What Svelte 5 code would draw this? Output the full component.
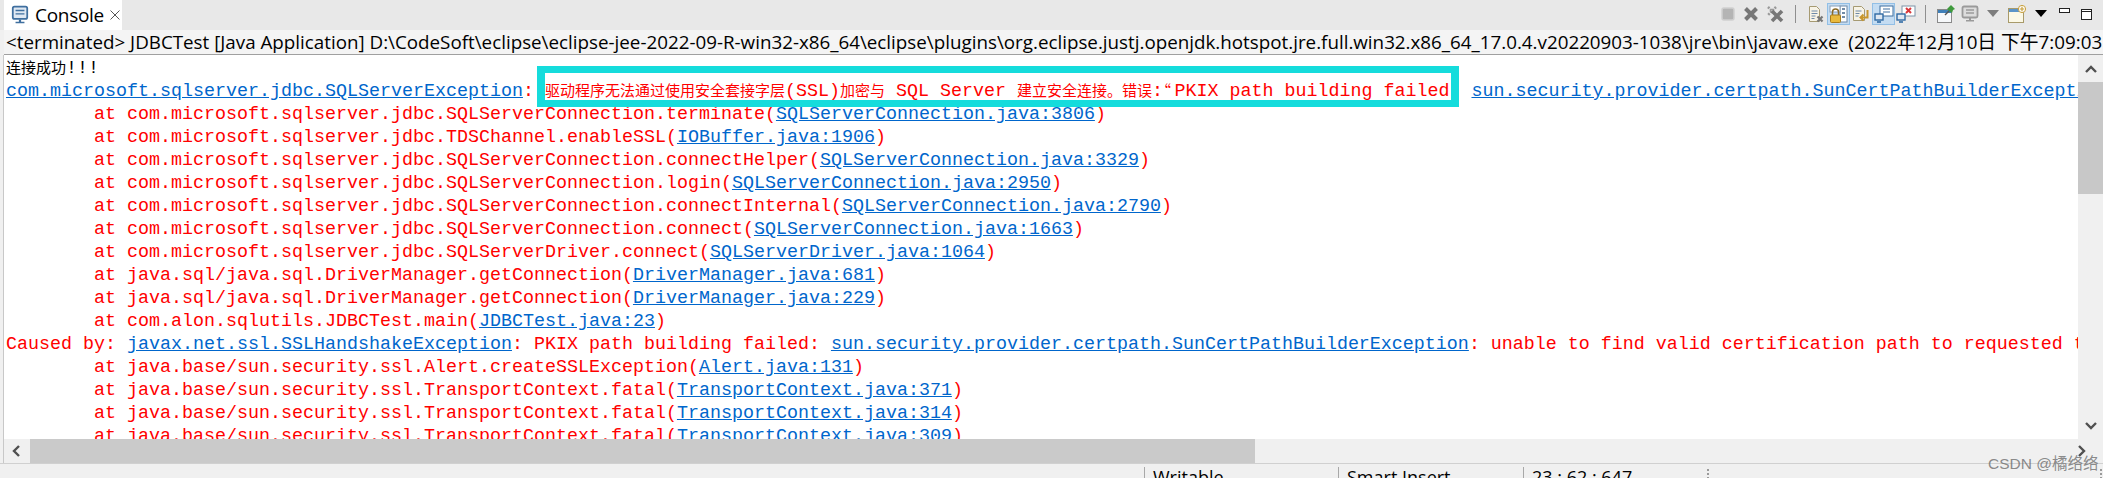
<script>
  // each row of the console: frame text and its source link
  const frames = [
    ["com.microsoft.sqlserver.jdbc.SQLServerConnection.terminate", "SQLServerConnection.java:3806"],
    ["com.microsoft.sqlserver.jdbc.TDSChannel.enableSSL", "IOBuffer.java:1906"],
    ["com.microsoft.sqlserver.jdbc.SQLServerConnection.connectHelper", "SQLServerConnection.java:3329"],
    ["com.microsoft.sqlserver.jdbc.SQLServerConnection.login", "SQLServerConnection.java:2950"],
    ["com.microsoft.sqlserver.jdbc.SQLServerConnection.connectInternal", "SQLServerConnection.java:2790"],
    ["com.microsoft.sqlserver.jdbc.SQLServerConnection.connect", "SQLServerConnection.java:1663"],
    ["com.microsoft.sqlserver.jdbc.SQLServerDriver.connect", "SQLServerDriver.java:1064"],
    ["java.sql/java.sql.DriverManager.getConnection", "DriverManager.java:681"],
    ["java.sql/java.sql.DriverManager.getConnection", "DriverManager.java:229"],
    ["com.alon.sqlutils.JDBCTest.main", "JDBCTest.java:23"],
  ];
  const frames2 = [
    ["java.base/sun.security.ssl.Alert.createSSLException", "Alert.java:131"],
    ["java.base/sun.security.ssl.TransportContext.fatal", "TransportContext.java:371"],
    ["java.base/sun.security.ssl.TransportContext.fatal", "TransportContext.java:314"],
    ["java.base/sun.security.ssl.TransportContext.fatal", "TransportContext.java:309"],
  ];
</script>

{#snippet frame(f)}
  <div class="row red indent">at {f[0]}(<a href="#top">{f[1]}</a>)</div>
{/snippet}

<div class="page">
  <div class="tabbar">
    <div class="tab">
      <svg width="20" height="20" viewBox="0 0 18 18">
        <rect x="2.5" y="1.5" width="13" height="11" rx="1.5" fill="#dfe8f2" stroke="#3f6f9f" stroke-width="1.6" />
        <path d="M5 5h8M5 8h8" stroke="#3f6f9f" stroke-width="1.3" />
        <path d="M8 13h2v2h3v1.5H5V15h3z" fill="#3f6f9f" />
      </svg>
      <span class="tabname">Console</span>
      <svg width="12" height="12" viewBox="0 0 12 12"><path d="M1.5 1.5l9 9M10.5 1.5l-9 9" stroke="#555" stroke-width="1" /></svg>
    </div>
    <div class="toolbar">
      <span class="tool w23"><svg width="14" height="14" viewBox="0 0 14 14"><rect x="1" y="1" width="12" height="12" rx="2" fill="#b4b4b4" stroke="#cfcfcf" stroke-width="1.5" /></svg></span>
      <span class="tool w24"><svg width="16" height="16" viewBox="0 0 16 16"><path d="M2.5 2.5l11 11M13.5 2.5l-11 11" stroke="#777" stroke-width="4" /></svg></span>
      <span class="tool w24"><svg width="18" height="18" viewBox="0 0 18 18"><path d="M2 2l8 8M10 2l-8 8" stroke="#999" stroke-width="2.5" stroke-dasharray="2 1" /><path d="M6 6l10 10M16 6L6 16" stroke="#777" stroke-width="3.6" /></svg></span>
      <span class="sep"></span>
      <span class="tool w23"><svg width="18" height="18" viewBox="0 0 18 18"><path d="M2.5 1.5h7l3 3v12h-10z" fill="#f7f3e6" stroke="#a69a72" /><path d="M4.5 6h6M4.5 8.5h6M4.5 11h4M4.5 13.5h3" stroke="#6f8aa8" /><path d="M10.5 11.5l5 5M15.5 11.5l-5 5" stroke="#777" stroke-width="2.2" /></svg></span>
      <span class="tool w23 on"><svg width="19" height="20" viewBox="0 0 19 20"><rect x="11" y="2" width="7" height="16" fill="#fff" stroke="#6f8aa8" /><path d="M13 5h3M13 9h3M13 13h3" stroke="#44668a" stroke-width="1.6" /><rect x="1" y="2" width="10" height="6" fill="#fff" stroke="#8aa0b8" /><path d="M3.5 11V8a3 3 0 0 1 6 0v3" fill="none" stroke="#8a6a28" stroke-width="1.5" /><rect x="1.5" y="11" width="10" height="7.5" rx="1" fill="#e8b93c" stroke="#a87c1c" /></svg></span>
      <span class="tool w22"><svg width="18" height="18" viewBox="0 0 18 18"><path d="M1.5 1.5h8l3 3v11h-11z" fill="#f7f3e6" stroke="#a69a72" /><path d="M3.5 6h6M3.5 8.5h4M3.5 11h3" stroke="#6f8aa8" /><path d="M15.5 5v7.5H9M11.5 9.5L8.5 12.5l3 3" fill="none" stroke="#c8962c" stroke-width="2" /></svg></span>
      <span class="tool w23 on"><svg width="20" height="18" viewBox="0 0 20 18"><rect x="6" y="1" width="13" height="10" fill="#fff" stroke="#3f6f9f" /><path d="M9 4h7M9 7h7" stroke="#3f6f9f" stroke-width="1.2" /><rect x="1" y="9" width="8" height="6" fill="#dfe8f2" stroke="#2f6aa4" stroke-width="1.4" /><path d="M3 17h4" stroke="#2f6aa4" stroke-width="1.6" /></svg></span>
      <span class="tool w22"><svg width="20" height="18" viewBox="0 0 20 18"><rect x="6" y="1" width="13" height="10" fill="#fff" stroke="#7d93a8" /><path d="M10 3l5 5M15 3l-5 5" stroke="#d8383c" stroke-width="2" /><rect x="1" y="9" width="8" height="6" fill="#dfe8f2" stroke="#2f6aa4" stroke-width="1.4" /><path d="M3 17h4" stroke="#2f6aa4" stroke-width="1.6" /></svg></span>
      <span class="sep"></span>
      <span class="tool w24"><svg width="20" height="20" viewBox="0 0 20 20"><rect x="1.5" y="5.5" width="14" height="13" fill="#f6f8fa" stroke="#8a8a8a" /><rect x="2" y="6" width="13" height="3" fill="#3f7fb8" /><path d="M9 11l5-5" stroke="#555" stroke-width="1.4" /><path d="M11 5l4-4 4 4-2 1-1 3-4-3z" fill="#3f9a3c" /></svg></span>
      <span class="tool w24"><svg width="18" height="18" viewBox="0 0 18 18"><rect x="1.5" y="1.5" width="15" height="11" rx="1.5" fill="#dcdcdc" stroke="#9a9a9a" stroke-width="1.8" /><path d="M5 5h8M5 8h8" stroke="#9a9a9a" stroke-width="1.3" /><path d="M8 13h2v2h3v1.5H5V15h3z" fill="#9a9a9a" /></svg></span>
      <span class="tool w22"><svg width="12" height="8" viewBox="0 0 12 8"><path d="M0 0h12L6 7z" fill="#7d7d7d" /></svg></span>
      <span class="tool w26"><svg width="20" height="20" viewBox="0 0 20 20"><rect x="1.5" y="4.5" width="15" height="14" fill="#fbf8e6" stroke="#a89a6a" /><rect x="2" y="5" width="14" height="3" fill="#5b94c8" /><circle cx="15" cy="5" r="3.6" fill="#fff" stroke="#c8a03c" /><path d="M15 2.8v4.4M12.8 5h4.4" stroke="#c8a03c" stroke-width="1.2" /></svg></span>
      <span class="tool w22"><svg width="12" height="8" viewBox="0 0 12 8"><path d="M0 0h12L6 7z" fill="#000" /></svg></span>
      <span class="tool w24 high"><svg width="11" height="5" viewBox="0 0 11 5"><rect x="0.5" y="0.5" width="10" height="4" fill="#fff" stroke="#222" /></svg></span>
      <span class="tool w22"><svg width="12" height="11" viewBox="0 0 12 11"><rect x="0.5" y="0.5" width="10" height="10" fill="#fff" stroke="#222" /><path d="M1 2.5h9" stroke="#222" /></svg></span>
    </div>
  </div>

  <div class="header">&lt;terminated&gt; JDBCTest [Java Application] D:\CodeSoft\eclipse\eclipse-jee-2022-09-R-win32-x86_64\eclipse\plugins\org.eclipse.justj.openjdk.hotspot.jre.full.win32.x86_64_17.0.4.v20220903-1038\jre\bin\javaw.exe  (2022年12月10日 下午7:09:03</div>

  <div class="body">
    <div class="console">
      <div class="row"><span class="zh">连接成功</span>!!!</div>
      <div class="row red">
        <a href="#top">com.microsoft.sqlserver.jdbc.SQLServerException</a>: <span class="zh">驱动程序无法通过使用安全套接字层</span>(SSL)<span class="zh">加密与</span> SQL Server <span class="zh">建立安全连接。错误</span>:<span class="zh quote">“</span>PKIX path building failed: <a href="#top">sun.security.provider.certpath.SunCertPathBuilderException</a>: unable to find valid certification path to requested target
      </div>
      {#each frames as f}
        {@render frame(f)}
      {/each}
      <div class="row red">Caused by: <a href="#top">javax.net.ssl.SSLHandshakeException</a>: PKIX path building failed: <a href="#top">sun.security.provider.certpath.SunCertPathBuilderException</a>: unable to find valid certification path to requested target</div>
      {#each frames2 as f}
        {@render frame(f)}
      {/each}
    </div>
    <div class="vscroll">
      <svg class="arrow" width="14" height="10" viewBox="0 0 14 10"><path d="M2 8l5-5 5 5" fill="none" stroke="#505050" stroke-width="2.4" /></svg>
      <div class="vthumb"></div>
      <svg class="arrow" width="14" height="10" viewBox="0 0 14 10"><path d="M2 2l5 5 5-5" fill="none" stroke="#505050" stroke-width="2.4" /></svg>
    </div>
  </div>

  <div class="hscroll">
    <svg class="harrow" width="10" height="14" viewBox="0 0 10 14"><path d="M8 2L3 7l5 5" fill="none" stroke="#505050" stroke-width="2.4" /></svg>
    <div class="hthumb"></div>
    <svg class="harrow right" width="10" height="14" viewBox="0 0 10 14"><path d="M2 2l5 5-5 5" fill="none" stroke="#505050" stroke-width="2.4" /></svg>
  </div>

  <div class="status">
    <span class="cell c1">Writable</span>
    <span class="cell c2">Smart Insert</span>
    <span class="cell c3">23 : 62 : 647</span>
    <span class="grip g1"></span>
    <span class="grip g2"></span>
  </div>

  <!-- annotation box drawn over the screenshot -->
  <div class="mark"></div>
  <div class="watermark">CSDN @橘络络</div>
</div>

<style>
  :global(body) {
    margin: 0;
  }
  .page {
    position: relative;
    width: 2103px;
    height: 478px;
    overflow: hidden;
    background: #f0f0f0;
    font-family: "Open Sans", "Noto Sans CJK SC", sans-serif;
    color: #000;
  }
  .tabbar {
    display: flex;
    height: 30px;
    background: #e8e8e8;
    padding-left: 4px;
  }
  .tab {
    display: flex;
    align-items: center;
    gap: 5px;
    width: 118px;
    box-sizing: border-box;
    padding-left: 6px;
    background: #fff;
  }
  .tabname {
    font-size: 19px;
    letter-spacing: -0.3px;
  }
  .toolbar {
    display: flex;
    align-items: center;
    margin-left: auto;
    padding-right: 5px;
    height: 26px;
    margin-top: -1px;
    padding-top: 2px;
  }
  .tool {
    display: flex;
    align-items: center;
    justify-content: center;
    height: 22px;
    box-sizing: border-box;
  }
  .tool.high {
    margin-top: -8px;
  }
  .w22 { width: 22px; }
  .w23 { width: 23px; }
  .w24 { width: 24px; }
  .w26 { width: 26px; }
  .on {
    background: #c4dcf2;
    border: 1px solid #92bfe6;
  }
  .sep {
    width: 1px;
    height: 18px;
    margin: 0 8px;
    background: #8f8f8f;
  }
  .header {
    height: 24px;
    line-height: 24px;
    margin-left: 4px;
    padding-left: 2px;
    background: #f4f4f4;
    border-bottom: 1px solid #a0a0a0;
    font-size: 18.8px;
    white-space: pre;
    overflow: hidden;
  }
  .body {
    display: flex;
    height: 384px;
    margin-left: 3px;
    border-left: 1px solid #c8c8c8;
  }
  .console {
    flex: 1;
    min-width: 0;
    padding-top: 2px;
    background: #fff;
    overflow: hidden;
    font-family: "Liberation Mono", monospace;
    font-size: 18.33px;
  }
  .row {
    height: 23px;
    line-height: 23px;
    padding-left: 2px;
    white-space: pre;
  }
  .red {
    color: #ff0000;
  }
  .indent {
    padding-left: 90px;
  }
  .zh {
    font-family: "Noto Sans CJK SC", sans-serif;
    font-size: 15px;
    line-height: 1;
  }
  .quote {
    margin-left: -7px;
    margin-right: 3.5px;
  }
  a {
    color: #0066cc;
    text-decoration: underline;
  }
  .vscroll {
    display: flex;
    flex-direction: column;
    align-items: center;
    justify-content: space-between;
    width: 25px;
    padding: 9px 0 8px;
    box-sizing: border-box;
    background: #f0f0f0;
    position: relative;
  }
  .vthumb {
    position: absolute;
    top: 27px;
    left: 0;
    width: 100%;
    height: 112px;
    background: #c8c8c8;
  }
  .hscroll {
    display: flex;
    align-items: center;
    height: 24px;
    margin-left: 3px;
    border-left: 1px solid #c8c8c8;
    background: #f0f0f0;
  }
  .harrow {
    margin: 0 9px 0 7px;
    flex: none;
  }
  .harrow.right {
    margin: 0 0 0 auto;
    transform: translate(-16px, 0);
  }
  .hthumb {
    width: 1225px;
    height: 100%;
    background: #cacaca;
  }
  .status {
    position: relative;
    height: 13px;
    border-top: 1px solid #d0d0d0;
    font-size: 18px;
    background: #f0f0f0;
  }
  .cell {
    position: absolute;
    top: 3px;
    height: 30px;
    padding-left: 8px;
    border-left: 1px solid #a8a8a8;
    white-space: nowrap;
    line-height: 20px;
  }
  .c1 { left: 1144px; }
  .c2 { left: 1338px; }
  .c3 { left: 1523px; }
  .grip {
    position: absolute;
    top: 5px;
    width: 2px;
    height: 10px;
    border-left: 2px dotted #9a9a9a;
  }
  .g1 { left: 1707px; }
  .g2 { left: 2100px; }
  .mark {
    position: absolute;
    left: 537px;
    top: 66px;
    width: 922px;
    height: 41px;
    box-sizing: border-box;
    border: solid #15dcdc;
    border-width: 7px 8px;
  }
  .watermark {
    position: absolute;
    left: 1988px;
    top: 451px;
    font-family: "Liberation Sans", "Noto Sans CJK SC", sans-serif;
    font-size: 15.5px;
    color: rgba(110, 110, 110, 0.8);
    white-space: nowrap;
  }
</style>
